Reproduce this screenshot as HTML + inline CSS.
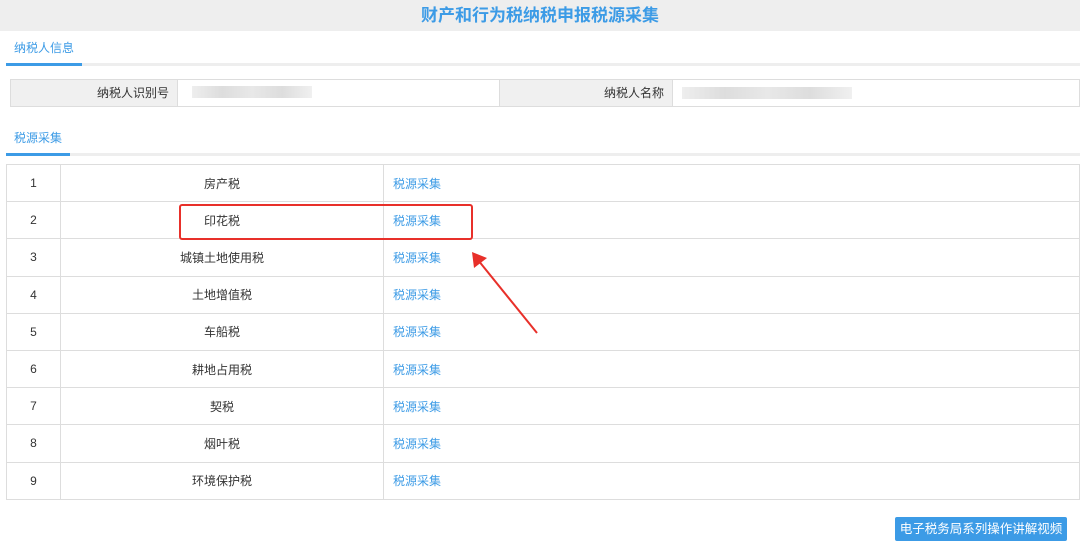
<!DOCTYPE html>
<html><head><meta charset="utf-8"><style>
body{margin:0;width:1080px;height:559px;background:#fff;font-family:"Liberation Sans","Noto Sans CJK SC",sans-serif;position:relative;overflow:hidden;font-size:12px;color:#333}
.hd{position:absolute;left:0;top:0;width:1080px;height:31px;background:#eeeeee;text-align:center;line-height:31px;color:#3c9be6;font-weight:bold;font-size:17px}
.tab{position:absolute;left:6px;height:35px;right:0;border-bottom:3px solid #eee}
.tab span{position:absolute;left:0;bottom:-3px;border-bottom:3px solid #3c9be6;padding:0 8px;line-height:30px;color:#3c9be6;font-size:12px}
.info{position:absolute;left:10px;top:79px;width:1070px;height:28px;border:1px solid #ddd;box-sizing:border-box;display:flex}
.info div{height:26px;line-height:26px;box-sizing:border-box}
.l{background:#f0f0f0;text-align:right;padding-right:8px;border-right:1px solid #ddd}
table{position:absolute;left:6px;top:164px;width:1074px;border-collapse:collapse}
td{border:1px solid #ddd;height:36.2px;padding:0;font-size:12px}
td.n{width:53px;text-align:center}
td.m{width:322px;text-align:center}
td.a{color:#3c9be6;padding-left:9px}
.btn{position:absolute;left:895px;top:517px;width:172px;height:24px;background:#3c9be6;border-radius:2px;color:#fff;text-align:center;line-height:24px;font-size:12.5px}
.box{position:absolute;left:179px;top:204px;width:294px;height:36px;border:2px solid #e8302a;border-radius:3px;box-sizing:border-box}
.blur{position:absolute;height:12px;background:linear-gradient(90deg,#eee,#ddd,#e8e8e8,#ddd,#f0f0f0)}
</style></head><body>
<div class="hd">财产和行为税纳税申报税源采集</div>
<div class="tab" style="top:28px"><span>纳税人信息</span></div>
<div class="info">
<div class="l" style="width:167px">纳税人识别号</div>
<div style="width:322px;border-right:1px solid #ddd"></div>
<div class="l" style="width:173px">纳税人名称</div>
<div style="flex:1"></div>
</div>
<div class="blur" style="left:192px;top:86px;width:120px"></div>
<div class="blur" style="left:682px;top:87px;width:170px"></div>
<div class="tab" style="top:118px"><span>税源采集</span></div>
<table>
<tr><td class="n">1</td><td class="m">房产税</td><td class="a">税源采集</td></tr>
<tr><td class="n">2</td><td class="m">印花税</td><td class="a">税源采集</td></tr>
<tr><td class="n">3</td><td class="m">城镇土地使用税</td><td class="a">税源采集</td></tr>
<tr><td class="n">4</td><td class="m">土地增值税</td><td class="a">税源采集</td></tr>
<tr><td class="n">5</td><td class="m">车船税</td><td class="a">税源采集</td></tr>
<tr><td class="n">6</td><td class="m">耕地占用税</td><td class="a">税源采集</td></tr>
<tr><td class="n">7</td><td class="m">契税</td><td class="a">税源采集</td></tr>
<tr><td class="n">8</td><td class="m">烟叶税</td><td class="a">税源采集</td></tr>
<tr><td class="n">9</td><td class="m">环境保护税</td><td class="a">税源采集</td></tr>
</table>
<div class="box"></div>
<svg style="position:absolute;left:0;top:0" width="1080" height="559"><line x1="537" y1="333" x2="478" y2="260" stroke="#e8302a" stroke-width="2"/><polygon points="472,252 474,268 487,258" fill="#e8302a"/></svg>
<div class="btn">电子税务局系列操作讲解视频</div>
</body></html>
